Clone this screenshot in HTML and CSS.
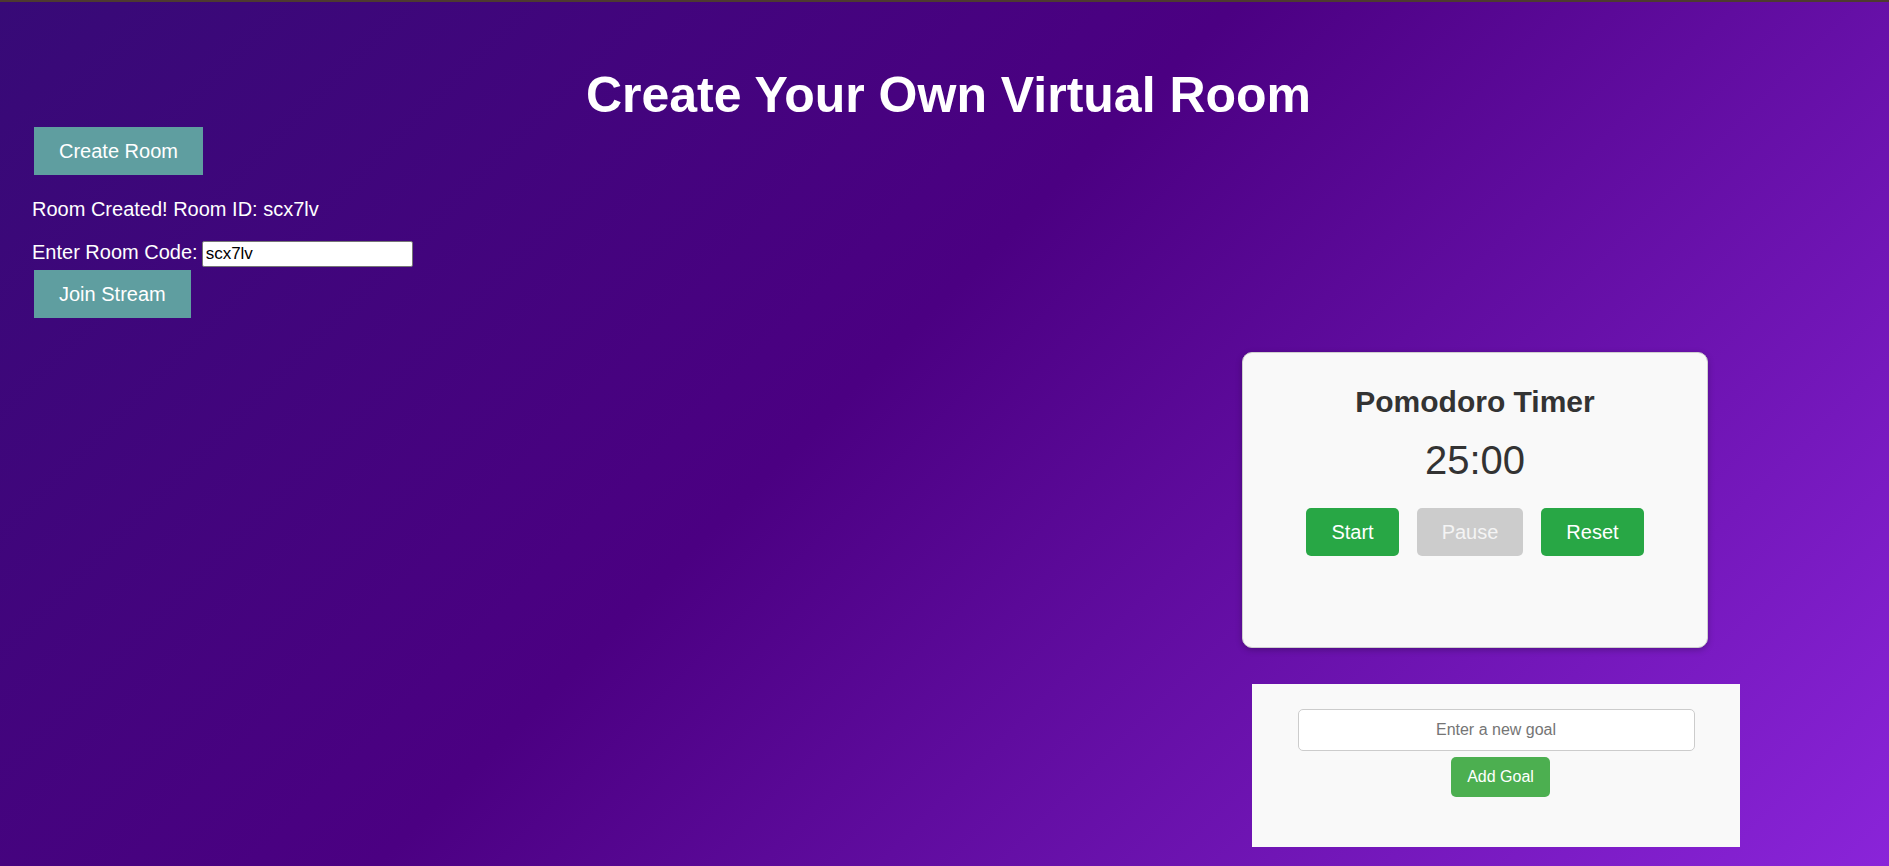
FILE: index.html
```html
<!DOCTYPE html>
<html lang="en">
<head>
<meta charset="utf-8">
<title>Virtual Room</title>
<link rel="stylesheet" href="styles.css">
</head>
<body>
  <h1 class="title">Create Your Own Virtual Room</h1>
  <div class="controls">
    <button class="teal-btn">Create Room</button>
    <p class="status">Room Created! Room ID: scx7lv</p>
    <div class="code-row">
      <label class="code-label" for="code">Enter Room Code:</label>
      <input class="code-input" id="code" type="text" value="scx7lv">
    </div>
    <button class="teal-btn join">Join Stream</button>
  </div>
  <div class="side">
    <div class="timer-card">
      <h2 class="timer-title">Pomodoro Timer</h2>
      <div class="timer-time">25:00</div>
      <div class="timer-buttons">
        <button class="t-btn green">Start</button>
        <button class="t-btn gray">Pause</button>
        <button class="t-btn green">Reset</button>
      </div>
    </div>
    <div class="goals">
      <input class="goal-input" type="text" placeholder="Enter a new goal">
      <button class="goal-btn">Add Goal</button>
    </div>
  </div>
</body>
</html>
```
FILE: styles.css
```css
* { box-sizing: border-box; }
html { background: #4b0082; }
body {
  margin: 0;
  min-height: 100vh;
  border-top: 2px solid #4e3a30;
  font-family: "Liberation Sans", Arial, sans-serif;
  color: #fff;
  background: linear-gradient(135deg, #370a77 0%, #4b0082 45%, #8a24d9 100%);
}
.title {
  margin: 66px 0 4px;
  padding-left: 8px;
  font-size: 50px;
  line-height: 55px;
  font-weight: bold;
  text-align: center;
  color: #fff;
}
.controls {
  display: flex;
  flex-direction: column;
  align-items: flex-start;
  padding-left: 32px;
}
.teal-btn {
  margin: 0 0 0 2px;
  padding: 0 25px;
  height: 48px;
  border: none;
  background: #5f9ea0;
  color: #fff;
  font-family: "Liberation Sans", Arial, sans-serif;
  font-size: 20px;
  line-height: 24px;
}
.teal-btn.join { margin-top: 3px; }
.status {
  margin: 23px 0 0;
  font-size: 20px;
  line-height: 23px;
}
.code-row {
  display: flex;
  align-items: baseline;
  margin-top: 20px;
}
.code-label {
  font-size: 20px;
  line-height: 23px;
  margin-right: 4px;
}
.code-input {
  width: 211px;
  height: 26px;
  padding: 2px 3px;
  border: 1px solid #767676;
  border-radius: 2px;
  background: #fff;
  color: #000;
  font-family: "Liberation Sans", Arial, sans-serif;
  font-size: 17px;
}
.side {
  display: flex;
  flex-direction: column;
  align-items: flex-start;
  margin: 34px 0 0 1242px;
}
.timer-card {
  width: 466px;
  padding: 32px 20px 91px;
  background: #f9f9f9;
  border: 1px solid #cfcfcf;
  border-radius: 10px;
  box-shadow: 0 2px 6px rgba(0, 0, 0, 0.25);
  text-align: center;
  color: #333;
}
.timer-title {
  margin: 0;
  font-size: 30px;
  line-height: 34px;
  font-weight: bold;
}
.timer-time {
  margin-top: 18px;
  font-size: 40px;
  line-height: 46px;
}
.timer-buttons {
  display: flex;
  justify-content: center;
  gap: 18px;
  margin-top: 25px;
}
.t-btn {
  height: 48px;
  padding: 0 25px;
  border: none;
  border-radius: 5px;
  color: #fff;
  font-family: "Liberation Sans", Arial, sans-serif;
  font-size: 20px;
  line-height: 24px;
}
.t-btn.green { background: #28a745; }
.t-btn.gray { background: #cccccc; color: #f4f4f4; }
.goals {
  display: flex;
  flex-direction: column;
  align-items: center;
  width: 488px;
  margin: 36px 0 0 10px;
  padding: 25px 0 50px;
  background: #f9f9f9;
}
.goal-input {
  width: 397px;
  height: 42px;
  padding: 0 10px;
  border: 1px solid #ccc;
  border-radius: 5px;
  background: #fff;
  font-family: "Liberation Sans", Arial, sans-serif;
  font-size: 16px;
  text-align: center;
  color: #333;
}
.goal-input::placeholder { color: #757575; }
.goal-btn {
  margin: 6px 0 0 9px;
  height: 40px;
  padding: 0 16px;
  border: none;
  border-radius: 5px;
  background: #4caf50;
  color: #fff;
  font-family: "Liberation Sans", Arial, sans-serif;
  font-size: 16px;
}
```
